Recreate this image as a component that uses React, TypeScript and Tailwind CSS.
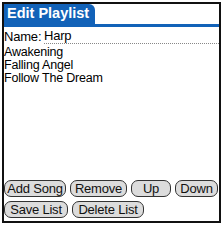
const songs = ["Awakening", "Falling Angel", "Follow The Dream"];

function PalmButton({ label, className }: { label: string; className?: string }) {
  return (
    <button
      type="button"
      className={
        "flex h-[17px] items-center justify-center rounded-[7px] border-[1.5px] border-[#333] bg-[#dcdcdc] pb-px text-[13px] leading-none tracking-[-0.2px] text-[#111] " +
        (className ?? "")
      }
    >
      {label}
    </button>
  );
}

export default function App() {
  return (
    <div className="h-[226px] w-[223px] bg-white p-[2px] font-['Liberation_Sans',Arial,sans-serif]">
      <div className="flex h-[221px] w-[219px] flex-col border-2 border-[#111] bg-white">
        <div className="flex items-end border-b-[3px] border-[#1262b8]">
          <div className="flex h-[20px] w-[91px] items-center rounded-tr-[6px] bg-[#1262b8] pl-[3px] text-[14.5px] font-bold text-white">
            Edit Playlist
          </div>
        </div>
        <div className="mt-[2px] flex h-[15px] items-center text-[13px] leading-none tracking-[-0.2px] text-black">
          <span className="w-[40px]">Name:</span>
          <span className="flex-1 border-b border-dotted border-[#888] pb-[1px]">Harp</span>
        </div>
        <div className="mt-[2px] flex flex-col text-[12.5px] leading-[13px] tracking-[-0.2px] text-black">
          {songs.map((s) => (
            <div key={s} className="h-[13px]">
              {s}
            </div>
          ))}
        </div>
        <div className="flex-1" />
        <div className="flex gap-[4px]">
          <PalmButton label="Add Song" className="w-[62px]" />
          <PalmButton label="Remove" className="w-[57px]" />
          <PalmButton label="Up" className="w-[40px]" />
          <PalmButton label="Down" className="w-[43px]" />
        </div>
        <div className="mt-[4px] mb-[3px] flex gap-[4px]">
          <PalmButton label="Save List" className="w-[64px]" />
          <PalmButton label="Delete List" className="w-[72px]" />
        </div>
      </div>
    </div>
  );
}
